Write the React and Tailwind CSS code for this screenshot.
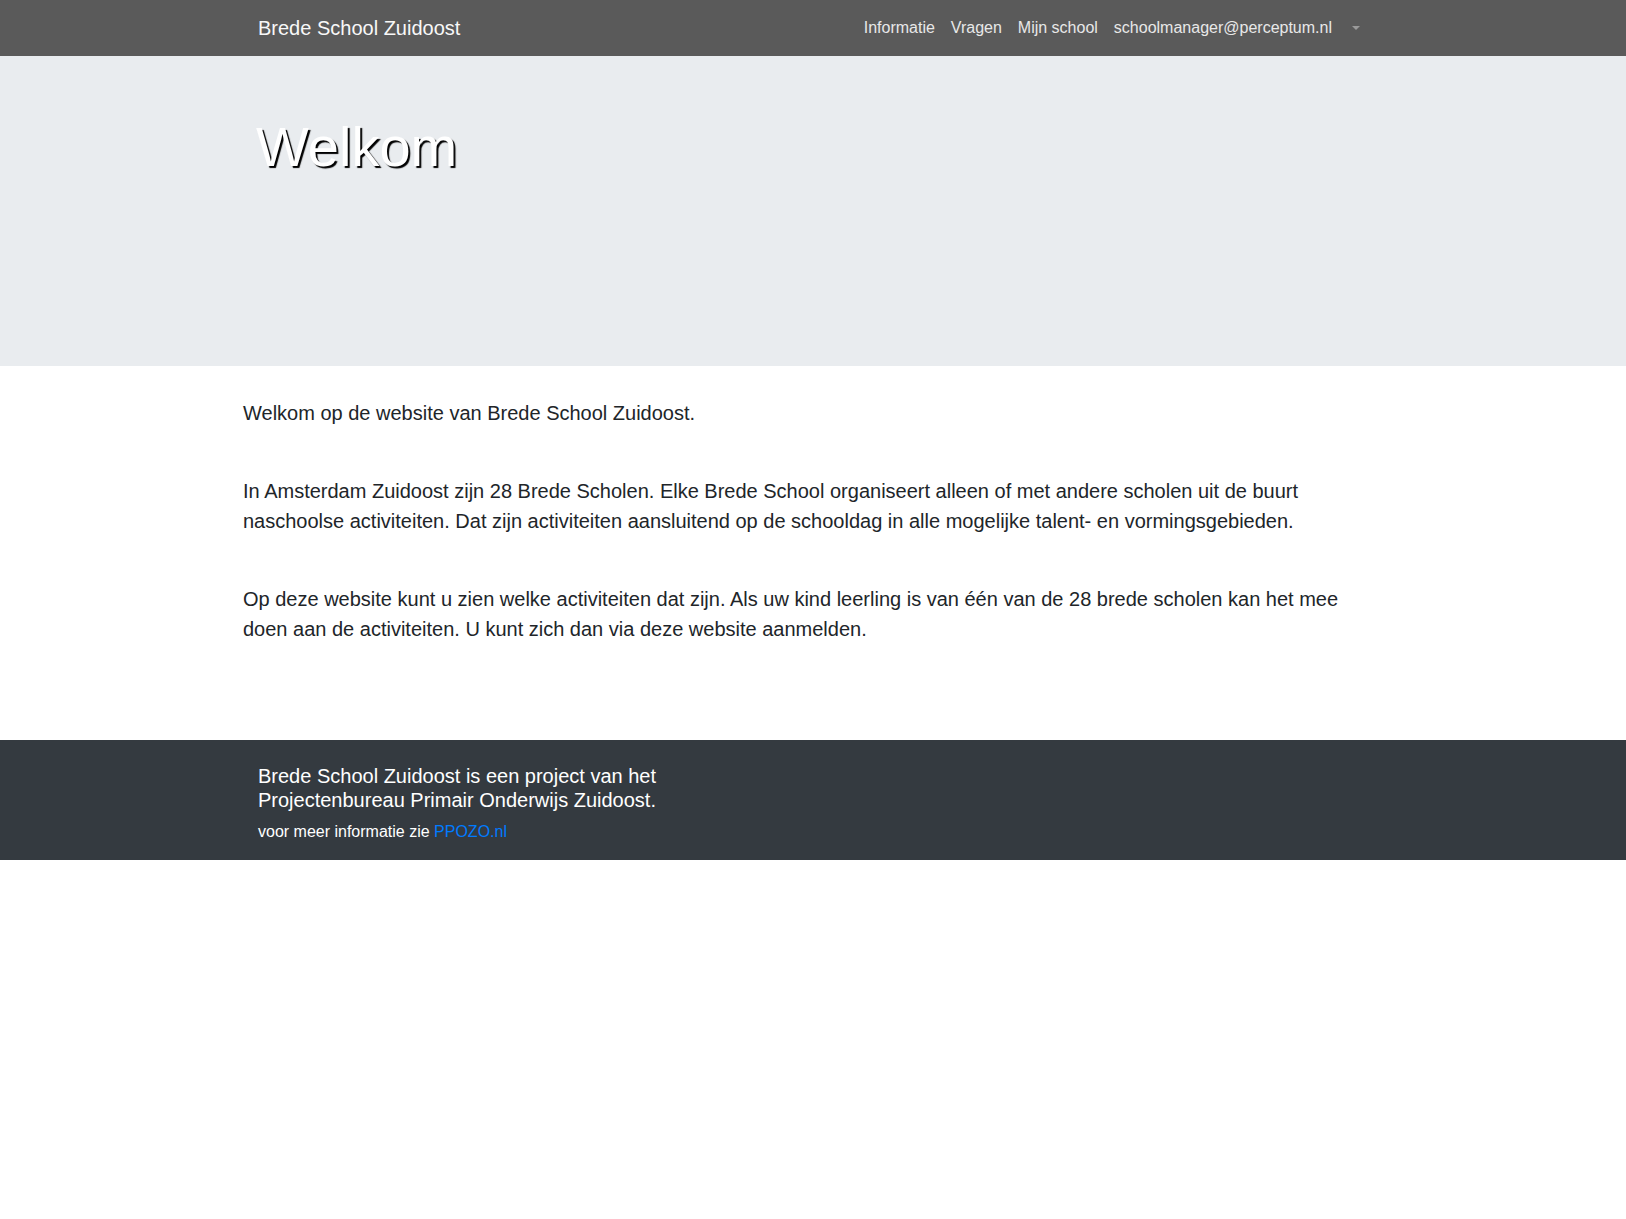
export default function App() {
  const font = { fontFamily: '"Liberation Sans", Arial, sans-serif' };
  return (
    <div style={font} className="min-h-[1219px] bg-white font-['Liberation_Sans',Arial,sans-serif]">
      <nav className="h-[56px] bg-[#5a5a5a]">
        <div className="mx-auto flex h-full w-[1140px] items-center justify-between px-[15px]">
          <a className="text-[20px] leading-[30px] text-[#f8f8f8]">Brede School Zuidoost</a>
          <ul className="flex items-center text-[16px] leading-[24px] text-[#e8e8e8]">
            <li className="px-2">Informatie</li>
            <li className="px-2">Vragen</li>
            <li className="px-2">Mijn school</li>
            <li className="px-2">schoolmanager@perceptum.nl</li>
            <li className="flex items-center px-2">
              <span className="ml-[4px] h-0 w-0 border-x-[4px] border-t-[4px] border-x-transparent border-t-[#9a9a9a]"></span>
            </li>
          </ul>
        </div>
      </nav>

      <section className="h-[310px] bg-[#e9ecef] pt-[57px]">
        <div className="mx-auto w-[1140px] px-[15px]">
          <h1 className="-ml-[2px] text-[56px] leading-[1.2] text-white [text-shadow:2px_2px_1px_#000]">Welkom</h1>
        </div>
      </section>

      <main className="mx-auto w-[1140px] pt-[32px] pb-[96px] text-[20px] leading-[30px] text-[#212529]">
        <p className="mb-[48px]">Welkom op de website van Brede School Zuidoost.</p>
        <p className="mb-[48px]">
          In Amsterdam Zuidoost zijn 28 Brede Scholen. Elke Brede School organiseert alleen of met andere scholen uit de buurt naschoolse activiteiten. Dat zijn activiteiten aansluitend op de schooldag in alle mogelijke talent- en vormingsgebieden.
        </p>
        <p>
          Op deze website kunt u zien welke activiteiten dat zijn. Als uw kind leerling is van één van de 28 brede scholen kan het mee doen aan de activiteiten. U kunt zich dan via deze website aanmelden.
        </p>
      </main>

      <footer className="bg-[#343a40] pt-[24px] pb-[16px]">
        <div className="mx-auto w-[1140px] px-[15px] text-white">
          <h5 className="mb-[8px] text-[20px] leading-[24px]">
            Brede School Zuidoost is een project van het
            <br />
            Projectenbureau Primair Onderwijs Zuidoost.
          </h5>
          <p className="text-[16px] leading-[24px]">
            voor meer informatie zie <a className="text-[#007bff]">PPOZO.nl</a>
          </p>
        </div>
      </footer>
    </div>
  );
}
